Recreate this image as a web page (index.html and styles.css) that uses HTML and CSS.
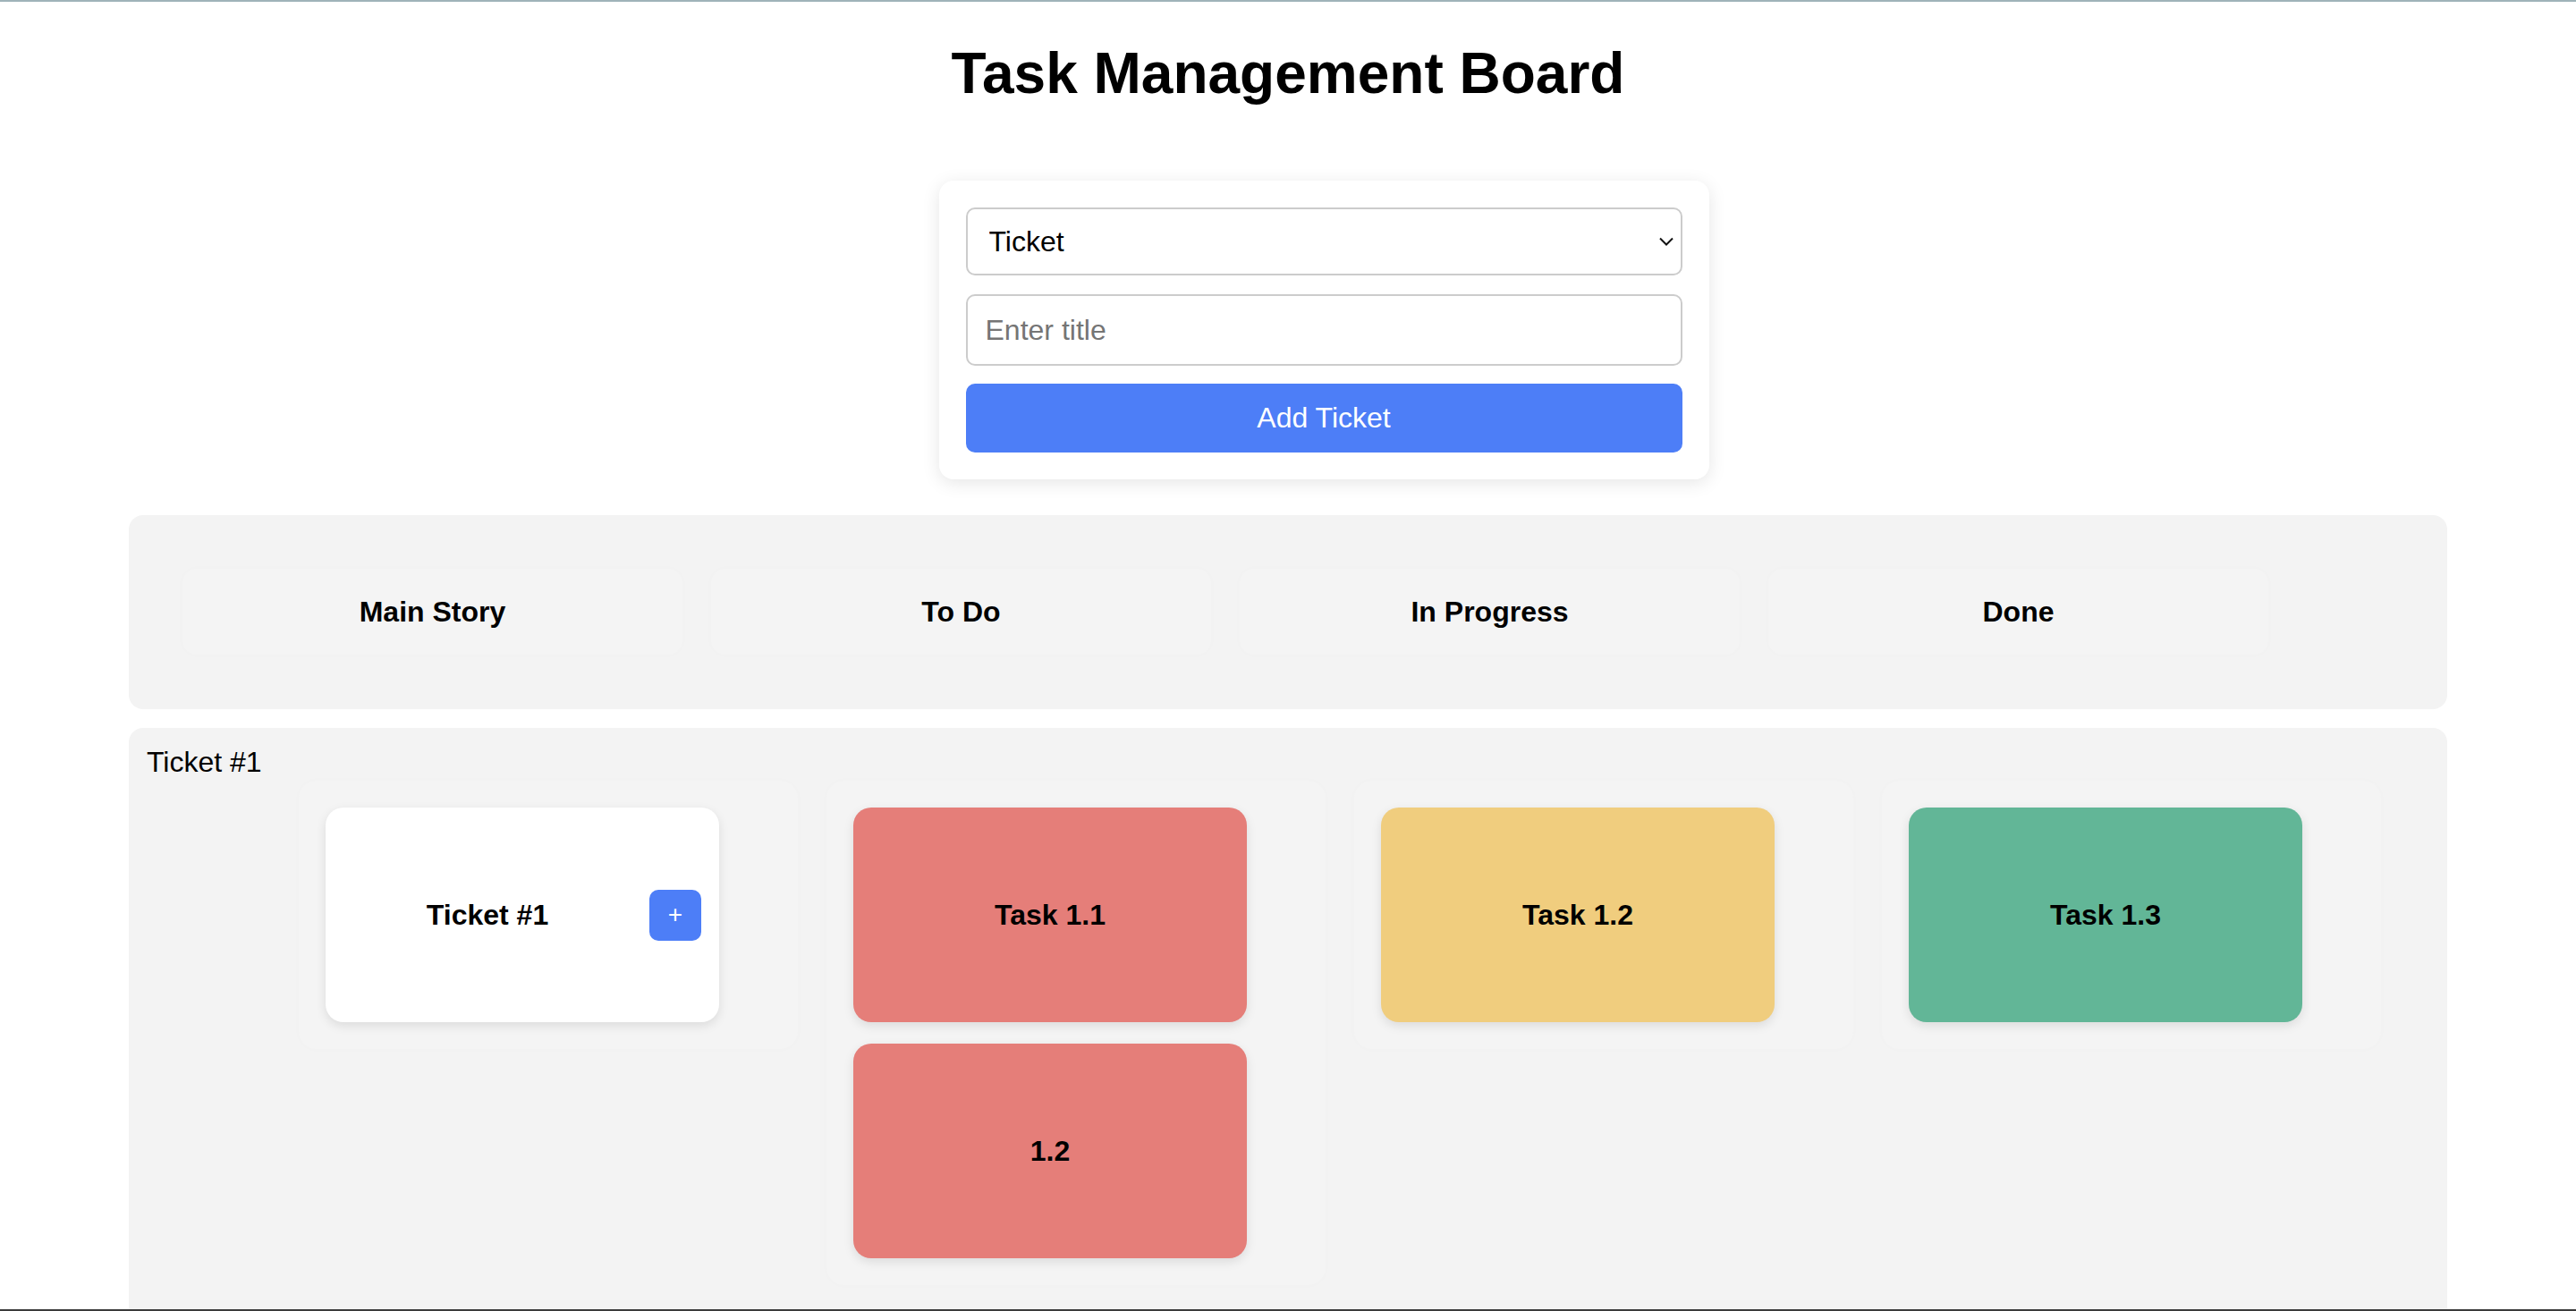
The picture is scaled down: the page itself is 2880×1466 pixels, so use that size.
FILE: index.html
```html
<!DOCTYPE html>
<html lang="en">
<head>
<meta charset="utf-8">
<title>Task Management Board</title>
<link rel="stylesheet" href="styles.css">
</head>
<body>
<div class="frame-top"></div>
<div class="frame-bottom"></div>
<main class="app">
  <h1 class="title">Task Management Board</h1>
  <div class="form-wrap">
    <form class="form-card">
      <div class="select-wrap">
        <select class="field select">
          <option>Ticket</option>
          <option>Task</option>
        </select>
        <svg class="chevron" width="16" height="10" viewBox="0 0 16 10"><path d="M1 1.5 L8 8.5 L15 1.5" fill="none" stroke="#111" stroke-width="2"/></svg>
      </div>
      <input class="field input" type="text" placeholder="Enter title">
      <button class="add-btn" type="button">Add Ticket</button>
    </form>
  </div>

  <section class="board-header">
    <div class="col-head">Main Story</div>
    <div class="col-head">To Do</div>
    <div class="col-head">In Progress</div>
    <div class="col-head">Done</div>
  </section>

  <section class="ticket-row">
    <div class="row-label">Ticket #1</div>
    <div class="row-cols">
      <div class="col">
        <div class="card card-ticket">
          <span class="card-title">Ticket #1</span>
          <button class="plus" type="button">+</button>
        </div>
      </div>
      <div class="col">
        <div class="card card-red">Task 1.1</div>
        <div class="card card-red">1.2</div>
      </div>
      <div class="col">
        <div class="card card-yellow">Task 1.2</div>
      </div>
      <div class="col">
        <div class="card card-green">Task 1.3</div>
      </div>
    </div>
  </section>
</main>
</body>
</html>
```

FILE: styles.css
```css
* {
  box-sizing: border-box;
}

html, body {
  margin: 0;
  padding: 0;
  background: #ffffff;
  font-family: "Liberation Sans", Arial, sans-serif;
  color: #000;
}

.frame-top {
  position: fixed;
  top: 0;
  left: 0;
  right: 0;
  height: 2px;
  background: #9fb3b9;
  z-index: 10;
}

.frame-bottom {
  position: fixed;
  bottom: 0;
  left: 0;
  right: 0;
  height: 2px;
  background: #3b3b3b;
  z-index: 10;
}

.app {
  padding-bottom: 40px;
}

.title {
  margin: 45px 0 0;
  font-size: 64px;
  font-weight: bold;
  text-align: center;
  line-height: 74px;
}

.form-wrap {
  display: flex;
  justify-content: center;
  padding-left: 80px;
  margin-top: 83px;
}

.form-card {
  width: 861px;
  padding: 30px;
  background: #fff;
  border-radius: 16px;
  box-shadow: 0 4px 20px rgba(0, 0, 0, 0.1);
  display: flex;
  flex-direction: column;
}

.select-wrap {
  position: relative;
}

.field {
  display: block;
  width: 100%;
  font-family: "Liberation Sans", Arial, sans-serif;
  font-size: 32px;
  color: #000;
  background: #fff;
  border: 2px solid #cccccc;
  border-radius: 10px;
  outline: none;
}

.select {
  height: 76px;
  padding: 0 40px 0 24px;
  -webkit-appearance: none;
  appearance: none;
}

.chevron {
  position: absolute;
  right: 10px;
  top: 50%;
  transform: translateY(-50%);
  pointer-events: none;
}

.input {
  height: 80px;
  margin-top: 21px;
  padding: 0 20px;
}

.input::placeholder {
  color: #757575;
}

.add-btn {
  height: 77px;
  margin-top: 20px;
  border: none;
  border-radius: 10px;
  background: #4d7ef7;
  color: #fff;
  font-family: "Liberation Sans", Arial, sans-serif;
  font-size: 32px;
}

.board-header {
  width: 2592px;
  margin: 40px auto 0;
  padding: 60px 60px 61px;
  background: #f3f3f3;
  border-radius: 16px;
  display: flex;
  gap: 32px;
}

.col-head {
  width: 559px;
  height: 96px;
  background: #f4f4f4;
  border-radius: 16px;
  box-shadow: 0 0 8px rgba(0, 0, 0, 0.015);
  display: flex;
  align-items: center;
  justify-content: center;
  font-size: 32px;
  font-weight: bold;
}

.ticket-row {
  width: 2592px;
  margin: 21px auto 0;
  padding: 20px 20px 60px;
  background: #f3f3f3;
  border-radius: 16px;
}

.row-label {
  font-size: 32px;
  line-height: 37px;
}

.row-cols {
  display: flex;
  align-items: flex-start;
  gap: 32px;
  margin: 2px 0 0 170px;
}

.col {
  width: 558px;
  padding: 30px;
  background: #f4f4f4;
  border-radius: 20px;
  box-shadow: 0 0 8px rgba(0, 0, 0, 0.015);
  display: flex;
  flex-direction: column;
  gap: 24px;
}

.card {
  width: 440px;
  height: 240px;
  border-radius: 20px;
  box-shadow: 0 4px 12px rgba(0, 0, 0, 0.1);
  display: flex;
  align-items: center;
  justify-content: center;
  font-size: 32px;
  font-weight: bold;
}

.card-ticket {
  background: #ffffff;
  padding: 0 20px;
  gap: 20px;
}

.card-title {
  flex: 1;
  text-align: center;
}

.plus {
  width: 58px;
  height: 57px;
  border: none;
  border-radius: 10px;
  background: #4d7ef7;
  color: #fff;
  font-family: "Liberation Sans", Arial, sans-serif;
  font-size: 28px;
  line-height: 1;
  padding: 0;
}

.card-red {
  background: #e57e79;
}

.card-yellow {
  background: #f0cd7e;
}

.card-green {
  background: #62b697;
}
```
